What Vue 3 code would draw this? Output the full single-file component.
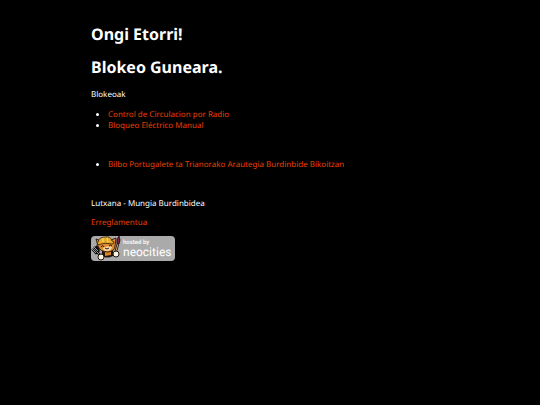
<template>
  <main class="page">
    <h1>Ongi Etorri!</h1>
    <h1>Blokeo Guneara.</h1>

    <p>Blokeoak</p>
    <ul>
      <li v-for="item in signalling" :key="item"><a href="#">{{ item }}</a></li>
    </ul>

    <ul class="spaced">
      <li><a href="#">Bilbo Portugalete ta Trianorako Arautegia Burdinbide Bikoitzan</a></li>
    </ul>

    <p>Lutxana - Mungia Burdinbidea</p>
    <p><a href="#">Erreglamentua</a></p>

    <!-- Hosting badge -->
    <a class="badge" href="#">
      <svg class="cat" viewBox="0 0 30 26" aria-hidden="true">
        <!-- body -->
        <path d="M11 15 L22 14 L22 20 Q16 23 11 20Z" fill="#1c140e" />
        <path d="M14 16 L20 15 L20 19 L14 20Z" fill="#d98528" />
        <!-- ears and head -->
        <path d="M7 10 L5 3 L10 5 L20 4 L25 2 L24 10 Q24 15 17 16 Q9 16 7 10Z" fill="#e08a2c" stroke="#28180d" stroke-width=".9" />
        <path d="M12 12 Q16 9 21 11 Q20 15 16 15 Q12 15 12 12Z" fill="#f6d9ac" />
        <!-- hard hat -->
        <path d="M7 6 Q8 1 14 1 Q20 0 21 5 L23 6 L22 8 Q14 6 6 9Z" fill="#e5aa2c" stroke="#342009" stroke-width=".8" />
        <path d="M12 2 L12 6 M16 2 L17 6" stroke="#ffe07a" stroke-width="1" />
        <path d="M10 11 Q12 8 13 11 M18 10 Q20 8 21 10 M14 12 Q16 14 18 12" fill="none" stroke="#28180d" stroke-width="1" />
        <!-- fork -->
        <path d="M1 13 L5 17 M3 11 L7 15 M5 10 L8 14 M4 17 Q7 18 8 14 M6 16 L11 21" fill="none" stroke="#0c0c0c" stroke-width="2.2" />
        <path d="M1 13 L5 17 M3 11 L7 15 M6 16 L11 21" fill="none" stroke="#b9bdbd" stroke-width=".8" />
        <!-- brush -->
        <path d="M24 18 L27 8" stroke="#1b100c" stroke-width="2.6" />
        <path d="M24 18 L27 8" stroke="#d6a363" stroke-width="1" />
        <path d="M26 8 Q25 3 28 0 Q30 4 28 8Z" fill="#7b2140" stroke="#200d12" stroke-width=".8" />
        <!-- paws -->
        <circle cx="10" cy="21" r="3" fill="#fff3df" stroke="#1c150e" />
        <circle cx="25" cy="18" r="3" fill="#fff3df" stroke="#1c150e" />
      </svg>
      <span class="brand"><small>hosted by</small><strong>neocities</strong></span>
    </a>
  </main>
</template>

<script setup>
const signalling = [
  'Control de Circulacion por Radio',
  'Bloqueo Eléctrico Manual',
]
</script>

<style>
body {
  margin: 0;
  background: #000;
}
</style>

<style scoped>
.page {
  max-width: 358px;
  margin: 0 auto;
  padding-top: 12px;
  color: #fff;
  font: 8px/11px "Noto Sans", sans-serif;
  text-rendering: geometricPrecision;
}

h1 {
  margin: 11px 0;
  font-size: 16px;
  line-height: 22px;
}

p {
  margin: 8px 0;
}

h1 + p {
  margin-top: 11px;
}

ul {
  margin: 9px 0;
  padding-left: 17px;
}

.spaced {
  margin: 28px 0;
}

a {
  color: #e83f00;
  text-decoration: none;
}

p + .badge {
  margin-top: 8px;
}

.badge {
  display: flex;
  width: 84px;
  height: 25px;
  border-radius: 4px;
  background: #aaa;
  color: #fff;
}

.cat {
  flex: none;
  width: 30px;
  height: 26px;
}

.brand {
  display: flex;
  flex-direction: column;
  padding: 3px 0 0 2px;
  font-family: Roboto, sans-serif;
}

.brand small {
  font-size: 6px;
  font-weight: 500;
  line-height: 8px;
}

.brand strong {
  font-size: 12px;
  font-weight: 400;
  line-height: 11px;
}
</style>
